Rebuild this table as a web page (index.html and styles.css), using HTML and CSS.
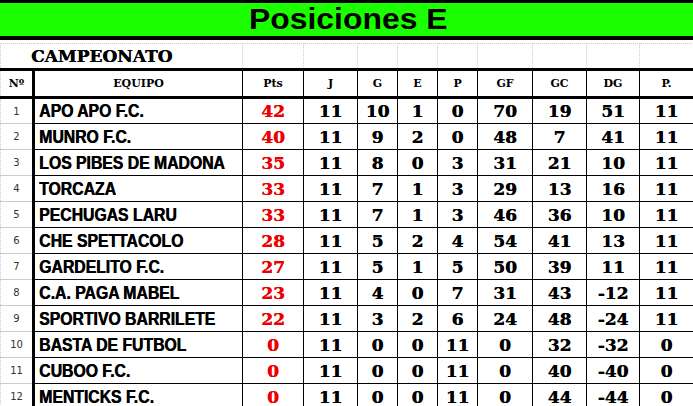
FILE: index.html
```html
<!DOCTYPE html>
<html lang="es">
<head>
<meta charset="utf-8">
<title>Posiciones E</title>
<link rel="stylesheet" href="styles.css">
</head>
<body>
<div class="sheet">
  <div class="banner"><h1 class="banner-title">Posiciones E</h1></div>
  <table class="grid">
    <colgroup>
      <col class="c-n"><col class="c-team"><col class="c-pts"><col class="c-j"><col class="c-g"><col class="c-e"><col class="c-p"><col class="c-gf"><col class="c-gc"><col class="c-dg"><col class="c-pp">
    </colgroup>
    <tr class="pre">
      <td class="pre-cell" colspan="2"><span class="camp">CAMPEONATO</span></td>
      <td></td><td></td><td></td><td></td><td></td><td></td><td></td><td></td><td></td>
    </tr>
    <tr class="head">
      <th class="n">Nº</th><th>EQUIPO</th><th>Pts</th><th>J</th><th>G</th><th>E</th><th>P</th><th>GF</th><th>GC</th><th>DG</th><th>P.</th>
    </tr>
    <tr><td class="n">1</td><td class="team"><span class="name">APO APO F.C.</span></td><td class="pts">42</td><td>11</td><td>10</td><td>1</td><td>0</td><td>70</td><td>19</td><td>51</td><td>11</td></tr>
    <tr><td class="n">2</td><td class="team"><span class="name">MUNRO F.C.</span></td><td class="pts">40</td><td>11</td><td>9</td><td>2</td><td>0</td><td>48</td><td>7</td><td>41</td><td>11</td></tr>
    <tr><td class="n">3</td><td class="team"><span class="name">LOS PIBES DE MADONA</span></td><td class="pts">35</td><td>11</td><td>8</td><td>0</td><td>3</td><td>31</td><td>21</td><td>10</td><td>11</td></tr>
    <tr><td class="n">4</td><td class="team"><span class="name">TORCAZA</span></td><td class="pts">33</td><td>11</td><td>7</td><td>1</td><td>3</td><td>29</td><td>13</td><td>16</td><td>11</td></tr>
    <tr><td class="n">5</td><td class="team"><span class="name">PECHUGAS LARU</span></td><td class="pts">33</td><td>11</td><td>7</td><td>1</td><td>3</td><td>46</td><td>36</td><td>10</td><td>11</td></tr>
    <tr><td class="n">6</td><td class="team"><span class="name">CHE SPETTACOLO</span></td><td class="pts">28</td><td>11</td><td>5</td><td>2</td><td>4</td><td>54</td><td>41</td><td>13</td><td>11</td></tr>
    <tr><td class="n">7</td><td class="team"><span class="name">GARDELITO F.C.</span></td><td class="pts">27</td><td>11</td><td>5</td><td>1</td><td>5</td><td>50</td><td>39</td><td>11</td><td>11</td></tr>
    <tr><td class="n">8</td><td class="team"><span class="name">C.A. PAGA MABEL</span></td><td class="pts">23</td><td>11</td><td>4</td><td>0</td><td>7</td><td>31</td><td>43</td><td>-12</td><td>11</td></tr>
    <tr><td class="n">9</td><td class="team"><span class="name">SPORTIVO BARRILETE</span></td><td class="pts">22</td><td>11</td><td>3</td><td>2</td><td>6</td><td>24</td><td>48</td><td>-24</td><td>11</td></tr>
    <tr><td class="n">10</td><td class="team"><span class="name">BASTA DE FUTBOL</span></td><td class="pts">0</td><td>11</td><td>0</td><td>0</td><td>11</td><td>0</td><td>32</td><td>-32</td><td>0</td></tr>
    <tr><td class="n">11</td><td class="team"><span class="name">CUBOO F.C.</span></td><td class="pts">0</td><td>11</td><td>0</td><td>0</td><td>11</td><td>0</td><td>40</td><td>-40</td><td>0</td></tr>
    <tr><td class="n">12</td><td class="team"><span class="name">MENTICKS F.C.</span></td><td class="pts">0</td><td>11</td><td>0</td><td>0</td><td>11</td><td>0</td><td>44</td><td>-44</td><td>0</td></tr>
  </table>
</div>
</body>
</html>
```

FILE: styles.css
```css
html, body {
  margin: 0;
  padding: 0;
  background: #fff;
}
.sheet {
  width: 693px;
  height: 406px;
  overflow: hidden;
}
.banner {
  border-top: 3px solid #000;
  border-bottom: 4px solid #000;
  background: #1cff00;
  height: 33px;
  display: flex;
  align-items: center;
  justify-content: center;
  padding-left: 4px;
}
.banner-title {
  margin: 0;
  font-family: "Liberation Sans", Arial, sans-serif;
  font-weight: bold;
  font-size: 29px;
  line-height: 33px;
  color: #000;
  transform: scaleX(1.1);
}
.grid {
  border-collapse: collapse;
  table-layout: fixed;
  width: 693px;
  margin-top: 3px;
}
.c-n { width: 33px; }
.c-team { width: 209px; }
.c-pts { width: 61px; }
.c-j { width: 54px; }
.c-g { width: 40px; }
.c-e { width: 40px; }
.c-p { width: 40px; }
.c-gf { width: 55px; }
.c-gc { width: 54px; }
.c-dg { width: 53px; }
.c-pp { width: 54px; }

.grid td, .grid th {
  padding: 0;
  text-align: center;
  border: 1px solid #000;
  overflow: hidden;
  white-space: nowrap;
  font-family: "DejaVu Serif", "Liberation Serif", serif;
  font-weight: bold;
  font-size: 17px;
  color: #000;
  text-shadow: 0.4px 0 0 currentColor;
}
.grid tr {
  height: 26px;
}
.pre td {
  border: 1px dotted #c8ccd6;
  border-bottom: 3px solid #000;
  height: 23px;
}
.pre td.pre-cell {
  text-align: left;
  padding-left: 30px;
}
.camp {
  font-family: "DejaVu Serif", serif;
  font-size: 17px;
  font-weight: bold;
}
.head th {
  font-size: 11px;
  text-shadow: none;
  height: 25px;
  border-bottom: 3px solid #000;
}
.grid .n {
  border-left: 1px dotted #c8ccd6;
  border-right: 3px solid #000;
  border-bottom-color: #c8ccd6;
  font-family: "DejaVu Sans", sans-serif;
  font-weight: normal;
  font-size: 10px;
  color: #333;
  text-shadow: none;
}
.head th.n {
  font-family: "DejaVu Serif", serif;
  font-weight: bold;
  font-size: 11px;
  color: #000;
  border-bottom-color: #000;
}
.grid td.team {
  text-align: left;
  padding-left: 4px;
  font-family: "Liberation Sans", Arial, sans-serif;
  font-weight: bold;
  font-size: 19px;
  text-shadow: 0.6px 0 0 #000;
}
.name {
  display: inline-block;
  transform: scaleX(0.83);
  transform-origin: left center;
  vertical-align: middle;
}
.grid td.pts {
  color: #ee0000;
}
```
